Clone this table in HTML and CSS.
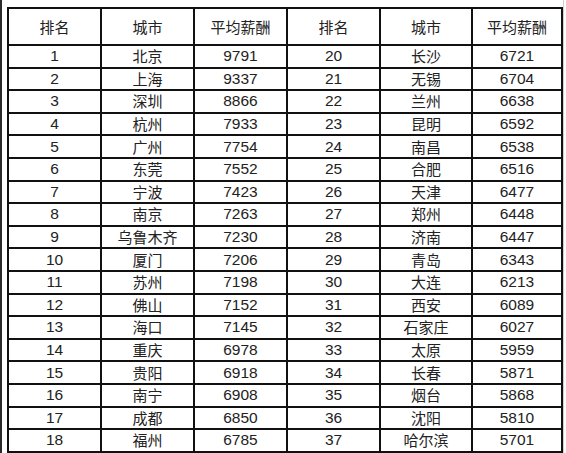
FILE: index.html
```html
<!DOCTYPE html>
<html lang="zh">
<head>
<meta charset="utf-8">
<link rel="stylesheet" href="styles.css">
</head>
<body>
<div class="frame">
<table class="rank">
<colgroup>
<col class="c1"><col class="c2"><col class="c3"><col class="c4"><col class="c5"><col class="c6">
</colgroup>
<thead>
<tr><th>排名</th><th>城市</th><th>平均薪酬</th><th>排名</th><th>城市</th><th>平均薪酬</th></tr>
</thead>
<tbody>
<tr><td>1</td><td class="city">北京</td><td>9791</td><td>20</td><td class="city">长沙</td><td>6721</td></tr>
<tr><td>2</td><td class="city">上海</td><td>9337</td><td>21</td><td class="city">无锡</td><td>6704</td></tr>
<tr><td>3</td><td class="city">深圳</td><td>8866</td><td>22</td><td class="city">兰州</td><td>6638</td></tr>
<tr><td>4</td><td class="city">杭州</td><td>7933</td><td>23</td><td class="city">昆明</td><td>6592</td></tr>
<tr><td>5</td><td class="city">广州</td><td>7754</td><td>24</td><td class="city">南昌</td><td>6538</td></tr>
<tr><td>6</td><td class="city">东莞</td><td>7552</td><td>25</td><td class="city">合肥</td><td>6516</td></tr>
<tr><td>7</td><td class="city">宁波</td><td>7423</td><td>26</td><td class="city">天津</td><td>6477</td></tr>
<tr><td>8</td><td class="city">南京</td><td>7263</td><td>27</td><td class="city">郑州</td><td>6448</td></tr>
<tr><td>9</td><td class="city">乌鲁木齐</td><td>7230</td><td>28</td><td class="city">济南</td><td>6447</td></tr>
<tr><td>10</td><td class="city">厦门</td><td>7206</td><td>29</td><td class="city">青岛</td><td>6343</td></tr>
<tr><td>11</td><td class="city">苏州</td><td>7198</td><td>30</td><td class="city">大连</td><td>6213</td></tr>
<tr><td>12</td><td class="city">佛山</td><td>7152</td><td>31</td><td class="city">西安</td><td>6089</td></tr>
<tr><td>13</td><td class="city">海口</td><td>7145</td><td>32</td><td class="city">石家庄</td><td>6027</td></tr>
<tr><td>14</td><td class="city">重庆</td><td>6978</td><td>33</td><td class="city">太原</td><td>5959</td></tr>
<tr><td>15</td><td class="city">贵阳</td><td>6918</td><td>34</td><td class="city">长春</td><td>5871</td></tr>
<tr><td>16</td><td class="city">南宁</td><td>6908</td><td>35</td><td class="city">烟台</td><td>5868</td></tr>
<tr><td>17</td><td class="city">成都</td><td>6850</td><td>36</td><td class="city">沈阳</td><td>5810</td></tr>
<tr><td>18</td><td class="city">福州</td><td>6785</td><td>37</td><td class="city">哈尔滨</td><td>5701</td></tr>
</tbody>
</table>
</div>
</body>
</html>
```
FILE: styles.css
```css
html, body {
  margin: 0;
  padding: 0;
  background: #fff;
}
.frame {
  box-sizing: border-box;
  width: 564px;
  height: 453px;
  border-left: 2px solid #2a2a2a;
  border-right: 1px solid #cfcfcf;
  padding: 7px 0 0 5px;
}
.rank {
  border-collapse: collapse;
  table-layout: fixed;
  width: 554px;
  font-family: "Liberation Sans", "Noto Sans CJK SC", sans-serif;
  color: #222;
}
.c1, .c2, .c3, .c4 { width: 93px; }
.c5 { width: 92px; }
.c6 { width: 90px; }
.rank th, .rank td {
  border: 2px solid #111;
  text-align: center;
  padding: 0;
}
.rank th {
  height: 35px;
  font-family: "Noto Sans CJK SC", sans-serif;
  font-weight: 400;
  font-size: 15px;
}
.rank td {
  height: 20.6px;
  font-size: 15.5px;
  line-height: 18px;
}
.rank td.city {
  font-family: "Noto Sans CJK SC", sans-serif;
  font-size: 15px;
}
```
